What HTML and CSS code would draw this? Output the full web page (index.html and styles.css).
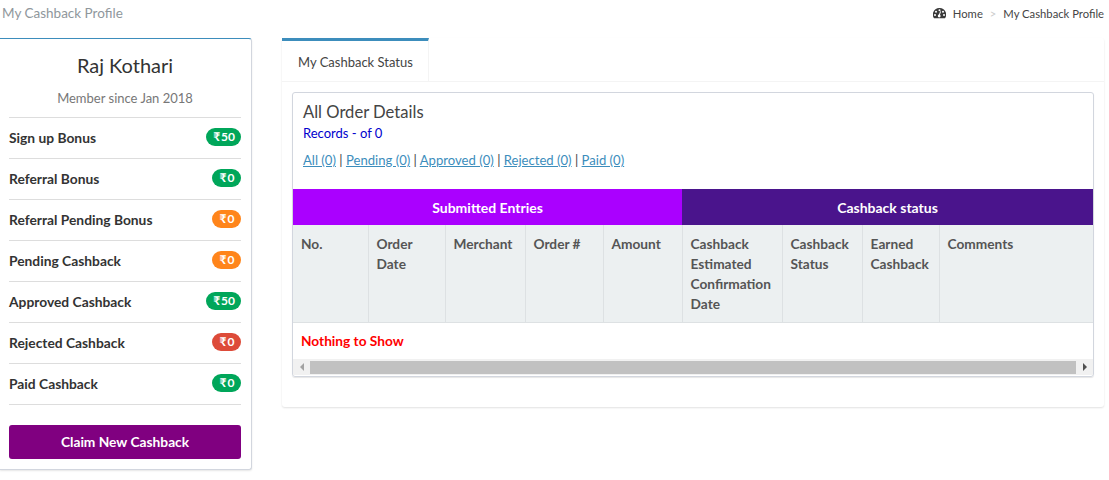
FILE: index.html
```html
<!DOCTYPE html>
<html lang="en">
<head>
    <meta charset="UTF-8">
    <title>My Cashback Profile</title>
    <link rel="stylesheet" href="styles.css">
</head>
<body>
    <div class="topbar">
        <h1 class="page-title">My Cashback Profile</h1>
        <div class="crumbs">
            <svg class="crumb-icon" width="13" height="11" viewBox="0 0 13 11">
                <path d="M6.5 0A6.5 6.5 0 0 0 1 10.2h11A6.5 6.5 0 0 0 6.5 0z" fill="#3a3a3a"/>
                <circle cx="6.5" cy="2.2" r="1" fill="#fff"/>
                <circle cx="3" cy="3.8" r="1" fill="#fff"/>
                <circle cx="10" cy="3.8" r="1" fill="#fff"/>
                <circle cx="2" cy="7" r="1" fill="#fff"/>
                <circle cx="11" cy="7" r="1" fill="#fff"/>
                <circle cx="6.2" cy="8" r="1.4" fill="#fff"/>
                <path d="M6 8L7.6 3.4" stroke="#fff" stroke-width="1"/>
            </svg>
            <a href="#" class="crumb">Home</a>
            <span class="crumb-sep">&gt;</span>
            <span class="crumb">My Cashback Profile</span>
        </div>
    </div>

    <div class="content">
        <div class="profile">
            <h2 class="name">Raj Kothari</h2>
            <p class="since">Member since Jan 2018</p>
            <ul class="bonus-list">
                <li><b>Sign up Bonus</b><span class="badge green">₹<i>50</i></span></li>
                <li><b>Referral Bonus</b><span class="badge green">₹<i>0</i></span></li>
                <li><b>Referral Pending Bonus</b><span class="badge orange">₹<i>0</i></span></li>
                <li><b>Pending Cashback</b><span class="badge orange">₹<i>0</i></span></li>
                <li><b>Approved Cashback</b><span class="badge green">₹<i>50</i></span></li>
                <li><b>Rejected Cashback</b><span class="badge red">₹<i>0</i></span></li>
                <li><b>Paid Cashback</b><span class="badge green">₹<i>0</i></span></li>
            </ul>
            <a href="#" class="claim">Claim New Cashback</a>
        </div>

        <div class="panel">
            <div class="tabs">
                <a href="#" class="tab">My Cashback Status</a>
            </div>
            <div class="tab-body">
                <div class="box">
                    <div class="box-head">
                        <h3>All Order Details</h3>
                        <p class="records">Records - of 0</p>
                        <p class="filters">
                            <a href="#">All (0)</a> | <a href="#">Pending (0)</a> | <a href="#">Approved (0)</a> | <a href="#">Rejected (0)</a> | <a href="#">Paid (0)</a>
                        </p>
                    </div>
                    <table class="orders">
                        <colgroup>
                            <col class="c75"><col class="c77"><col class="c80"><col class="c78"><col class="c79">
                            <col class="c100"><col class="c80"><col class="c77"><col>
                        </colgroup>
                        <tr class="groups">
                            <th colspan="5" class="g1">Submitted Entries</th>
                            <th colspan="4" class="g2">Cashback status</th>
                        </tr>
                        <tr class="cols">
                            <th>No.</th>
                            <th>Order Date</th>
                            <th>Merchant</th>
                            <th>Order #</th>
                            <th>Amount</th>
                            <th>Cashback Estimated Confirmation Date</th>
                            <th>Cashback Status</th>
                            <th>Earned Cashback</th>
                            <th>Comments</th>
                        </tr>
                        <tr class="empty">
                            <td colspan="9">Nothing to Show</td>
                        </tr>
                    </table>
                    <div class="scrollbar">
                        <span class="arrow left"></span>
                        <span class="thumb"></span>
                        <span class="arrow right"></span>
                    </div>
                </div>
            </div>
        </div>
    </div>
</body>
</html>
```

FILE: styles.css
```css
*{
    margin: 0;
    padding: 0;
    box-sizing: border-box;
}
a{
    text-decoration: none;
}
li{
    list-style: none;
}
body{
    margin: 0;
    background: #fff;
    font-family: "Lato", "Noto Sans", sans-serif;
    font-size: 14px;
    color: #444;
    height: 480px;
    overflow: hidden;
}
.topbar{
    display: flex;
    justify-content: space-between;
    height: 38px;
    padding: 4px 5px 0 2px;
}
.page-title{
    font-size: 13.5px;
    font-weight: 400;
    line-height: 18px;
    color: #8f979c;
}
.crumbs{
    display: flex;
    align-items: center;
    height: 19px;
    font-size: 11.25px;
    color: #444;
}
.crumb-icon{
    margin-right: 7px;
}
.crumb{
    color: #444;
}
.crumb-sep{
    margin: 0 7px;
    color: #ccc;
}
.content{
    display: flex;
    align-items: flex-start;
}
.profile{
    width: 252px;
    height: 432px;
    padding: 0 10px 0 9px;
    background: #fff;
    border-top: 1px solid #3c8dbc;
    border-right: 1px solid #d2d6de;
    border-bottom: 1px solid #d2d6de;
    border-radius: 0 3px 3px 0;
    box-shadow: 0 1px 2px rgba(0,0,0,.1);
}
.name{
    margin-top: 14px;
    font-size: 20px;
    font-weight: 400;
    line-height: 24px;
    text-align: center;
    color: #333;
}
.since{
    margin-top: 12px;
    line-height: 18px;
    font-size: 13px;
    text-align: center;
    color: #777;
}
.bonus-list{
    margin-top: 10px;
    border-top: 1px solid #ddd;
}
.bonus-list li{
    display: flex;
    justify-content: space-between;
    height: 41px;
    padding-top: 10px;
    border-bottom: 1px solid #ddd;
}
.bonus-list b{
    font-size: 13.8px;
    line-height: 20px;
    color: #333;
}
.badge{
    min-width: 29px;
    height: 18px;
    padding: 0 6px 0 7px;
    border-radius: 9px;
    font-size: 12px;
    font-weight: 700;
    line-height: 18px;
    text-align: center;
    color: #fff;
}
.badge i{
    margin-left: 1px;
    font-style: normal;
}
.green{
    background: #00a65a;
}
.orange{
    background: #ff851b;
}
.red{
    background: #dd4b39;
}
.claim{
    display: block;
    margin-top: 20px;
    height: 34px;
    border-radius: 3px;
    background: #800080;
    color: #fff;
    font-size: 13.75px;
    font-weight: 700;
    line-height: 34px;
    text-align: center;
}
.panel{
    width: 822px;
    height: 369px;
    margin-left: 30px;
    border-radius: 3px;
    box-shadow: 0 1px 2px rgba(0,0,0,.12);
}
.tabs{
    display: flex;
    height: 44px;
    border-bottom: 1px solid #f4f4f4;
}
.tab{
    width: 147px;
    height: 44px;
    padding: 12px 0 0 16px;
    border-top: 3px solid #3c8dbc;
    border-right: 1px solid #f4f4f4;
    color: #444;
    font-size: 13px;
    line-height: 18px;
}
.tab-body{
    padding: 10px;
}
.box{
    height: 285px;
    border: 1px solid #d2d6de;
    border-radius: 3px;
    box-shadow: 0 1px 1px rgba(0,0,0,.1);
}
.box-head{
    height: 96px;
    padding: 9px 10px 0;
}
.box-head h3{
    font-size: 16.6px;
    font-weight: 400;
    line-height: 21px;
    color: #444;
}
.records{
    margin-top: 1px;
    line-height: 18px;
    font-size: 13px;
    color: #0000cd;
}
.filters{
    margin-top: 9px;
    line-height: 18px;
    font-size: 13.1px;
}
.filters a{
    color: #3c8dbc;
    text-decoration: underline;
}
.orders{
    width: 100%;
    table-layout: fixed;
    border-collapse: collapse;
}
.c75{ width: 75px; }
.c77{ width: 77px; }
.c78{ width: 78px; }
.c79{ width: 79px; }
.c80{ width: 80px; }
.c100{ width: 100px; }
.groups th{
    height: 36px;
    color: #fff;
    font-size: 14px;
    text-align: center;
}
.g1{
    background: #a0f;
}
.g2{
    background: #4a148c;
}
.cols th{
    height: 97px;
    padding: 9px 8px 0;
    vertical-align: top;
    text-align: left;
    background: #ecf0f1;
    border-right: 1px solid #dde1e3;
    border-bottom: 1px solid #dde1e3;
    color: #555;
    font-size: 13.7px;
    line-height: 20px;
}
.cols th:last-child{
    border-right: 0;
}
.empty td{
    height: 37px;
    padding-left: 8px;
    color: #f00;
    font-size: 13.7px;
    font-weight: 700;
}
.scrollbar{
    display: flex;
    align-items: center;
    height: 16px;
    background: #f1f1f1;
}
.arrow{
    width: 17px;
    display: flex;
    justify-content: center;
}
.arrow.left::before{
    content: "";
    border: 4px solid transparent;
    border-left: 0;
    border-right-color: #a3a3a3;
}
.arrow.right::before{
    content: "";
    border: 4px solid transparent;
    border-right: 0;
    border-left-color: #505050;
}
.thumb{
    flex: 1;
    height: 13px;
    background: #c1c1c1;
}
```
